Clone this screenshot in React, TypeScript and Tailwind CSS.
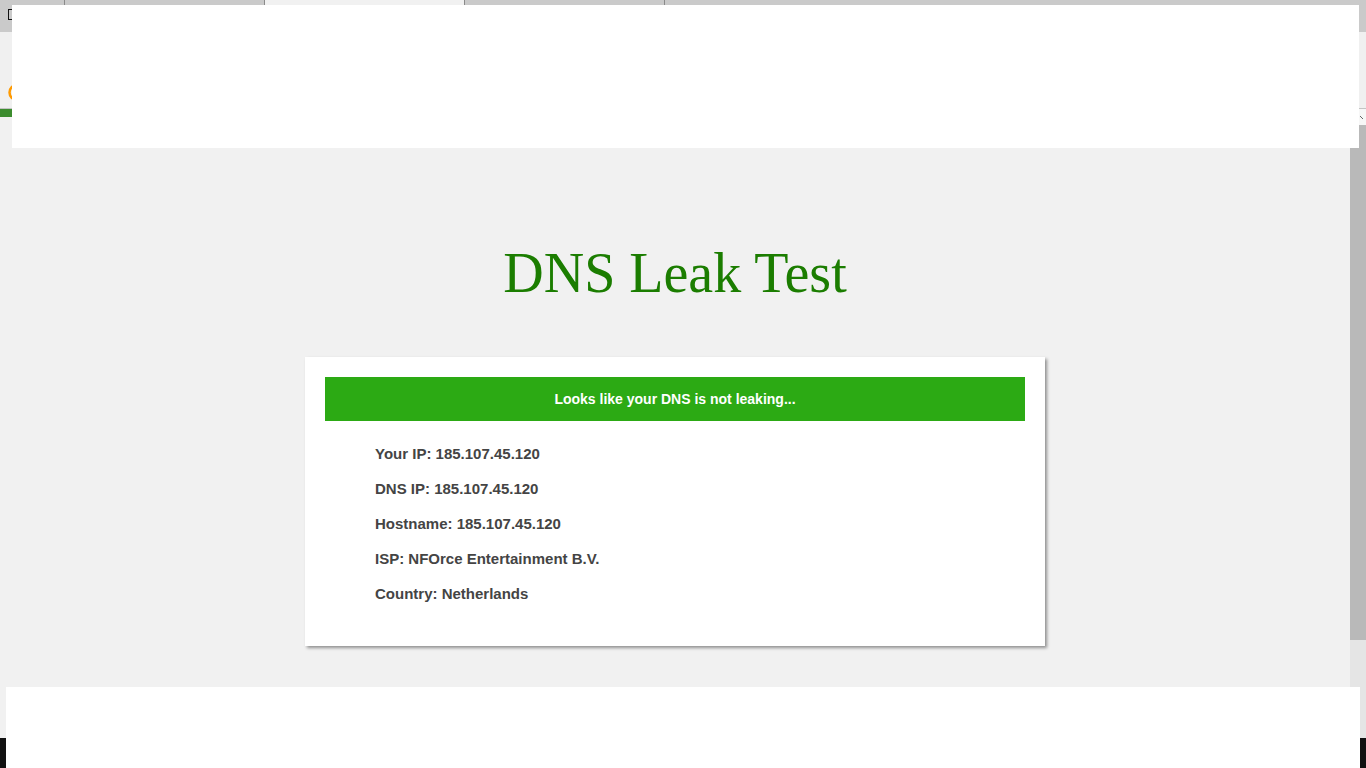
import React from "react";

const rows = [
  "Your IP: 185.107.45.120",
  "DNS IP: 185.107.45.120",
  "Hostname: 185.107.45.120",
  "ISP: NFOrce Entertainment B.V.",
  "Country: Netherlands",
];

export default function App() {
  return (
    <div
      className="relative w-[1366px] h-[768px] overflow-hidden bg-[#f1f1f1] flex flex-col"
      style={{ fontFamily: '"Liberation Sans", Arial, sans-serif' }}
    >
      {/* tab strip */}
      <div className="h-[32px] bg-[#cacaca] flex shrink-0">
        <div className="w-[65px] border-r border-[#8a8a8a] pl-[8px] pt-[9px]">
          <svg width="10" height="11" viewBox="0 0 10 11">
            <rect x="0.5" y="0.5" width="9" height="10" fill="none" stroke="#111" strokeWidth="1" />
          </svg>
        </div>
        <div className="w-[200px] border-r border-[#8a8a8a]" />
        <div className="w-[200px] border-r border-[#8a8a8a] bg-[#f1f1f1]" />
        <div className="w-[200px] border-r border-[#8a8a8a]" />
        <div className="flex-1" />
      </div>

      {/* toolbar */}
      <div className="h-[77px] bg-[#f0f0f0] border-b border-[#c4c4c4] shrink-0 pl-[8px] pt-[52px]">
        <svg width="18" height="18" viewBox="0 0 18 18">
          <circle cx="9" cy="8.5" r="7.5" fill="none" stroke="#ff9a00" strokeWidth="2.5" />
        </svg>
      </div>

      {/* page + scrollbar */}
      <div className="flex flex-1 min-h-0">
        <div className="w-[1350px] flex flex-col items-center">
          <div className="h-[8px] w-full bg-[#3c8c2e]" />
          <h1
            className="mt-[124px] text-[56px] leading-[64px] text-[#1b7d00]"
            style={{ fontFamily: '"Liberation Serif", "Times New Roman", serif' }}
          >
            DNS Leak Test
          </h1>
          <div className="mt-[52px] w-[740px] h-[289px] bg-white p-[20px] shadow-[2px_2px_3px_rgba(0,0,0,0.4)]">
            <div className="h-[44px] bg-[#2caa14] flex items-center justify-center text-white text-[14px] font-bold">
              Looks like your DNS is not leaking...
            </div>
            <div className="mt-[15px] pl-[50px]">
              {rows.map((r) => (
                <div key={r} className="h-[35px] leading-[35px] text-[15px] font-bold text-[#444444]">
                  {r}
                </div>
              ))}
            </div>
          </div>
        </div>
        <div className="w-[16px] flex flex-col">
          <div className="h-[16px] bg-[#f7f7f7] flex items-center justify-end pr-[3px]">
            <svg width="5" height="4" viewBox="0 0 5 4">
              <rect x="0" y="0" width="1" height="1" fill="#666" />
              <rect x="2" y="1" width="1" height="1" fill="#666" />
              <rect x="3" y="2" width="1" height="1" fill="#666" />
              <rect x="4" y="3" width="1" height="1" fill="#666" />
            </svg>
          </div>
          <div className="h-[515px] bg-[#b9b9b9]" />
          <div className="flex-1 bg-[#e5e5e5]" />
        </div>
      </div>

      {/* taskbar */}
      <div className="h-[30px] bg-[#111111] shrink-0" />

      {/* white overlays */}
      <div className="absolute left-[12px] top-[5px] w-[1347px] h-[143px] bg-white" />
      <div className="absolute left-[6px] top-[687px] w-[1354px] h-[81px] bg-white" />
    </div>
  );
}
